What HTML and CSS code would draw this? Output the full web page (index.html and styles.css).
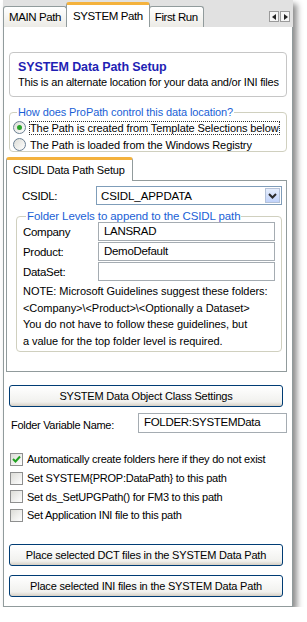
FILE: index.html
```html
<!DOCTYPE html>
<html lang="en">
<head>
    <meta charset="UTF-8">
    <title>ProPath - SYSTEM Path</title>
    <link rel="stylesheet" href="styles.css">
</head>
<body>

<div class="window">
    <!-- Top tab strip -->
    <div class="tabstrip">
        <div class="tab">MAIN Path</div>
        <div class="tab active">SYSTEM Path</div>
        <div class="tab">First Run</div>
        <div class="scroller">
            <span class="arrow left"></span><span class="arrow right"></span>
        </div>
    </div>

    <div class="page">
        <div class="header-box">
            <div class="title">SYSTEM Data Path Setup</div>
            <div class="subtitle">This is an alternate location for your data and/or INI files</div>
        </div>

        <fieldset class="group control-group">
            <legend>How does ProPath control this data location?</legend>
            <label class="radio-row">
                <span class="radio checked"></span>
                <span class="focused">The Path is created from Template Selections below</span>
            </label>
            <label class="radio-row">
                <span class="radio"></span>
                <span>The Path is loaded from the Windows Registry</span>
            </label>
        </fieldset>

        <!-- Inner tab control -->
        <div class="inner-tabs">
            <div class="tab active inner">CSIDL Data Path Setup</div>
        </div>
        <div class="inner-page">
            <div class="csidl-row">
                <span class="csidl-label">CSIDL:</span>
                <div class="select">
                    <span>CSIDL_APPDATA</span>
                    <span class="drop">
                        <svg width="9" height="6" viewBox="0 0 9 6"><path d="M1 1 L4.5 4.5 L8 1" fill="none" stroke="#2b2b2b" stroke-width="2"/></svg>
                    </span>
                </div>
            </div>

            <fieldset class="group folder-group">
                <legend>Folder Levels to append to the CSIDL path</legend>
                <div class="field-row">
                    <span class="field-label">Company</span>
                    <div class="textbox">LANSRAD</div>
                </div>
                <div class="field-row">
                    <span class="field-label">Product:</span>
                    <div class="textbox">DemoDefault</div>
                </div>
                <div class="field-row">
                    <span class="field-label">DataSet:</span>
                    <div class="textbox"></div>
                </div>
                <div class="note">
                    NOTE: Microsoft Guidelines suggest these folders:<br>
                    &lt;Company&gt;\&lt;Product&gt;\&lt;Optionally a Dataset&gt;<br>
                    You do not have to follow these guidelines, but<br>
                    a value for the top folder level is required.
                </div>
            </fieldset>
        </div>

        <button class="btn class-btn">SYSTEM Data Object Class Settings</button>

        <div class="var-row">
            <span class="var-label">Folder Variable Name:</span>
            <div class="textbox var-box">FOLDER:SYSTEMData</div>
        </div>

        <div class="checks">
            <label class="check-row">
                <span class="checkbox checked">
                    <svg width="9" height="8" viewBox="0 0 9 8"><path d="M1 4 L3.5 6.5 L8 1.5" fill="none" stroke="#21a121" stroke-width="2"/></svg>
                </span>
                Automatically create folders here if they do not exist
            </label>
            <label class="check-row"><span class="checkbox"></span>Set SYSTEM{PROP:DataPath} to this path</label>
            <label class="check-row"><span class="checkbox"></span>Set ds_SetUPGPath() for FM3 to this path</label>
            <label class="check-row"><span class="checkbox"></span>Set Application INI file to this path</label>
        </div>

        <button class="btn place-btn">Place selected DCT files in the SYSTEM Data Path</button>
        <button class="btn place-btn second">Place selected INI files in the SYSTEM Data Path</button>
    </div>
</div>

</body>
</html>
```

FILE: styles.css
```css
body {
    margin: 0;
    padding: 0;
    background: #ffffff;
    font-family: "Liberation Sans", Arial, sans-serif;
    font-size: 11px;
    letter-spacing: -0.3px;
    color: #000000;
}
.window {
    width: 290px;
    height: 607px;
    margin-left: 3px;
    display: flex;
    flex-direction: column;
    box-shadow: 4px 4px 6px rgba(0, 0, 0, 0.45);
}
.tabstrip {
    height: 27px;
    background: #e1e1e1;
    display: flex;
    align-items: flex-end;
    position: relative;
}
.tab {
    height: 21px;
    padding: 0 5px;
    line-height: 21px;
    font-size: 11.5px;
    letter-spacing: -0.4px;
    background: linear-gradient(#ffffff, #ecebe6);
    border: 1px solid #919b9c;
    border-bottom: none;
    border-radius: 3px 3px 0 0;
    box-sizing: border-box;
    margin-right: -1px;
}
.tab.active {
    height: 25px;
    line-height: 22px;
    background: #ffffff;
    border-top: 3px solid #f4b23d;
    padding: 0 6px;
    position: relative;
    z-index: 1;
}
.scroller {
    position: absolute;
    right: 3px;
    top: 11px;
    display: flex;
    gap: 1px;
}
.arrow {
    width: 10px;
    height: 11px;
    background: #f5f5f5;
    border: 1px solid #9a9a9a;
    box-sizing: border-box;
    position: relative;
}
.arrow::after {
    content: "";
    position: absolute;
    top: 2px;
    border-top: 3px solid transparent;
    border-bottom: 3px solid transparent;
}
.arrow.left::after {
    left: 2px;
    border-right: 4px solid #222;
}
.arrow.right::after {
    left: 3px;
    border-left: 4px solid #222;
}
.page {
    flex: 1;
    background: #ffffff;
    border: 1px solid #919b9c;
    margin-top: -1px;
    padding: 25px 5px 0 1px;
    display: flex;
    flex-direction: column;
}
.header-box {
    margin-left: 4px;
    height: 45px;
    border: 1px solid #c6c6c6;
    border-radius: 4px;
    box-sizing: border-box;
    padding: 6px 0 0 8px;
}
.title {
    color: #1f1fb4;
    font-weight: bold;
    font-size: 12.5px;
    letter-spacing: -0.1px;
    line-height: 16px;
}
.subtitle {
    line-height: 15px;
    letter-spacing: -0.2px;
}
.group {
    border: 1px solid #d0d0bf;
    border-radius: 4px;
    margin: 0;
    padding: 0;
}
.group legend {
    color: #1a5fd6;
    padding: 0 1px;
    letter-spacing: -0.1px;
}
.control-group {
    margin: 9px 0 0 4px;
    height: 46px;
    box-sizing: border-box;
    padding: 1px 0 0 3px;
}
.control-group legend {
    margin-left: 4px;
}
.radio-row {
    display: flex;
    align-items: center;
    gap: 4px;
    height: 17px;
    letter-spacing: -0.1px;
}
.radio {
    width: 11px;
    height: 11px;
    border: 1px solid #6a7f93;
    border-radius: 50%;
    background: linear-gradient(135deg, #dcdcd6, #ffffff);
    position: relative;
}
.radio.checked::after {
    content: "";
    position: absolute;
    left: 3px;
    top: 3px;
    width: 5px;
    height: 5px;
    border-radius: 50%;
    background: #29a329;
}
.focused {
    outline: 1px dotted #333;
}
.inner-tabs {
    display: flex;
    margin: 5px 0 0 1px;
    height: 23px;
}
.tab.inner {
    font-size: 11px;
    letter-spacing: -0.2px;
    height: 24px;
    line-height: 20px;
    padding: 0 7px 0 6px;
}
.inner-page {
    height: 192px;
    border: 1px solid #919b9c;
    margin-left: 1px;
    box-sizing: border-box;
    padding: 5px 4px 0 9px;
}
.csidl-row {
    display: flex;
    align-items: center;
}
.csidl-label {
    width: 74px;
    padding-left: 6px;
    font-size: 11.5px;
}
.select {
    flex: 1;
    height: 19px;
    border: 1px solid #7f9db9;
    box-sizing: border-box;
    display: flex;
    align-items: center;
    justify-content: space-between;
    padding-left: 4px;
    font-size: 11.5px;
    letter-spacing: -0.1px;
}
.drop {
    width: 15px;
    height: 15px;
    margin-right: 1px;
    background: linear-gradient(#e6eefc, #c1d3fb);
    border: 1px solid #b4c2d8;
    box-sizing: border-box;
    display: flex;
    align-items: center;
    justify-content: center;
}
.folder-group {
    margin-top: 5px;
    height: 142px;
    box-sizing: border-box;
    padding: 0 6px 0 6px;
}
.folder-group legend {
    margin-left: 3px;
    font-size: 11.5px;
}
.field-row {
    display: flex;
    align-items: center;
    margin-bottom: 1px;
}
.field-label {
    width: 75px;
    font-size: 11.5px;
}
.textbox {
    flex: 1;
    height: 19px;
    border: 1px solid #a5acb2;
    box-sizing: border-box;
    padding-left: 5px;
    line-height: 17px;
    font-size: 11.5px;
}
.note {
    margin-top: 2px;
    line-height: 16.7px;
    letter-spacing: -0.05px;
}
.btn {
    font-family: "Liberation Sans", Arial, sans-serif;
    font-size: 11px;
    letter-spacing: -0.2px;
    height: 22px;
    margin-left: 4px;
    width: 274px;
    background: linear-gradient(#ffffff, #f1f1ee 80%, #d6d0c5);
    border: 1px solid #003c74;
    border-radius: 3px;
    color: #000;
    padding: 0;
}
.class-btn {
    margin-top: 13px;
}
.var-row {
    display: flex;
    align-items: center;
    margin-top: 6px;
    margin-left: 6px;
}
.var-label {
    width: 127px;
    padding-top: 4px;
}
.var-box {
    height: 20px;
    padding-left: 5px;
}
.checks {
    margin-top: 17px;
    margin-left: 5px;
}
.check-row {
    display: flex;
    align-items: center;
    gap: 4px;
    height: 18.7px;
    letter-spacing: -0.25px;
}
.checkbox {
    width: 13px;
    height: 13px;
    border: 1px solid #8e8f8f;
    box-sizing: border-box;
    background: linear-gradient(135deg, #dcdcd7, #ffffff);
    display: flex;
    align-items: center;
    justify-content: center;
}
.place-btn {
    margin-top: 19px;
}
.place-btn.second {
    margin-top: 9px;
}
```
